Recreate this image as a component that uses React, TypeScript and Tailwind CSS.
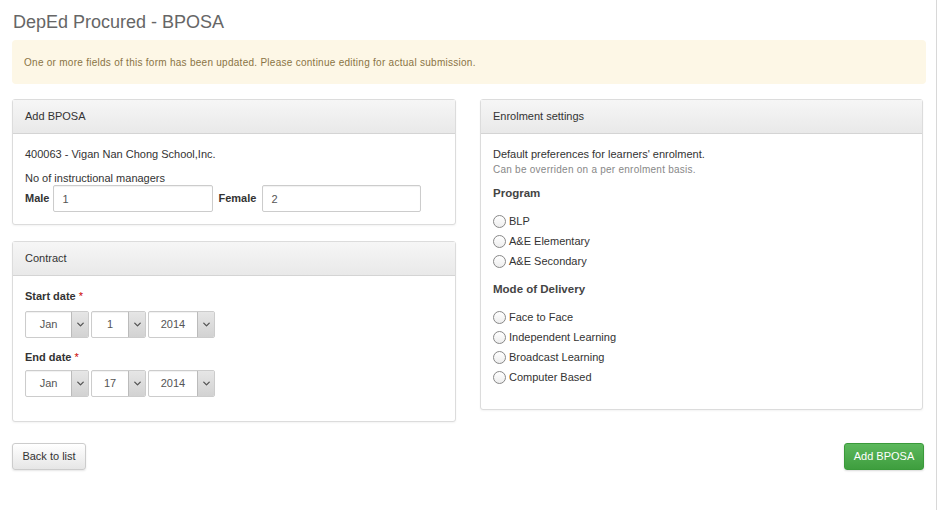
import { ChevronDown } from "lucide-react";

function Panel({ title, children, className = "" }: { title: string; children: React.ReactNode; className?: string }) {
  return (
    <div className={`rounded-[3px] border border-[#dcdcdc] bg-white shadow-[0_1px_2px_rgba(0,0,0,0.05)] ${className}`}>
      <div className="flex h-[34px] items-center border-b border-[#d4d4d4] bg-gradient-to-b from-[#f6f6f6] to-[#e9e9e9] px-3 text-[11px] text-[#333]">
        {title}
      </div>
      {children}
    </div>
  );
}

function Select({ value, width }: { value: string; width: string }) {
  return (
    <div className={`flex h-[27px] ${width} overflow-hidden rounded-[2px] border border-[#ccc] bg-white shadow-[inset_0_1px_1px_rgba(0,0,0,0.06)]`}>
      <div className="flex flex-1 items-center justify-center text-[11px] text-[#555]">{value}</div>
      <div className="flex w-[17px] items-center justify-center border-l border-[#bbb] bg-gradient-to-b from-[#e6e6e6] to-[#d2d2d2]">
        <ChevronDown size={11} strokeWidth={3} className="text-[#555]" />
      </div>
    </div>
  );
}

function Radio({ label }: { label: string }) {
  return (
    <label className="flex h-[20px] items-center gap-[3px] text-[11px] text-[#333]">
      <span className="h-[13px] w-[13px] rounded-full border border-[#888] bg-gradient-to-b from-white to-[#eee]" />
      {label}
    </label>
  );
}

export default function App() {
  return (
    <div className="h-[510px] w-[937px] border-r border-[#d8d8d8] bg-white px-3 font-['Liberation_Sans',Arial,sans-serif]">
      <h1 className="pt-[11px] pl-px text-[18px] leading-[22px] text-[#666]">DepEd Procured - BPOSA</h1>

      <div className="mt-[7px] flex h-[44px] w-[914px] items-center rounded-[4px] bg-[#fdf7e6] px-3 text-[10px] tracking-[0.27px] text-[#8a7444]">
        One or more fields of this form has been updated. Please continue editing for actual submission.
      </div>

      <div className="mt-[15px] flex gap-[24px]">
        <div className="flex w-[444px] flex-col gap-[16px]">
          <Panel title="Add BPOSA">
            <div className="px-3 pt-[13px] pb-[12px] text-[11px] text-[#333]">
              <div className="leading-[14px]">400063 - Vigan Nan Chong School,Inc.</div>
              <div className="mt-[10px] leading-[14px]">No of instructional managers</div>
              <div className="flex items-center">
                <span className="mr-[4px] font-bold">Male</span>
                <input
                  readOnly
                  value="1"
                  className="h-[27px] w-[160px] rounded-[2px] border border-[#ccc] px-[8px] text-[11px] text-[#555] shadow-[inset_0_1px_1px_rgba(0,0,0,0.06)] outline-none"
                />
                <span className="mr-[6px] ml-[5px] font-bold">Female</span>
                <input
                  readOnly
                  value="2"
                  className="h-[27px] w-[159px] rounded-[2px] border border-[#ccc] px-[8px] text-[11px] text-[#555] shadow-[inset_0_1px_1px_rgba(0,0,0,0.06)] outline-none"
                />
              </div>
            </div>
          </Panel>

          <Panel title="Contract" className="h-[181px]">
            <div className="px-3 pt-[13px] text-[11px] text-[#333]">
              <div className="font-bold leading-[14px]">
                Start date <span className="font-normal text-[#c00]">*</span>
              </div>
              <div className="mt-[8px] flex gap-[2px]">
                <Select value="Jan" width="w-[64px]" />
                <Select value="1" width="w-[55px]" />
                <Select value="2014" width="w-[67px]" />
              </div>
              <div className="mt-[12px] font-bold leading-[14px]">
                End date <span className="font-normal text-[#c00]">*</span>
              </div>
              <div className="mt-[6px] flex gap-[2px]">
                <Select value="Jan" width="w-[64px]" />
                <Select value="17" width="w-[55px]" />
                <Select value="2014" width="w-[67px]" />
              </div>
            </div>
          </Panel>
        </div>

        <Panel title="Enrolment settings" className="h-[311px] w-[443px]">
          <div className="px-3 pt-[13px] text-[11px] text-[#333]">
            <div className="leading-[14px]">Default preferences for learners' enrolment.</div>
            <div className="mt-[3px] text-[10px] leading-[12px] tracking-[0.25px] text-[#888]">Can be overriden on a per enrolment basis.</div>
            <div className="mt-[10px] text-[11.5px] font-bold leading-[14px] text-[#444]">Program</div>
            <div className="mt-[11px] flex flex-col">
              <Radio label="BLP" />
              <Radio label="A&E Elementary" />
              <Radio label="A&E Secondary" />
            </div>
            <div className="mt-[11px] text-[11.5px] font-bold leading-[14px] text-[#444]">Mode of Delivery</div>
            <div className="mt-[11px] flex flex-col">
              <Radio label="Face to Face" />
              <Radio label="Independent Learning" />
              <Radio label="Broadcast Learning" />
              <Radio label="Computer Based" />
            </div>
          </div>
        </Panel>
      </div>

      <div className="mt-[21px] flex w-[912px] justify-between">
        <button className="h-[27px] w-[74px] rounded-[3px] border border-[#ccc] bg-gradient-to-b from-white to-[#e6e6e6] text-[11px] text-[#333] shadow-[0_1px_2px_rgba(0,0,0,0.1)]">
          Back to list
        </button>
        <button className="h-[27px] w-[80px] rounded-[3px] border border-[#3a9a3a] bg-gradient-to-b from-[#5cb85c] to-[#3e9e3e] text-[11px] text-white shadow-[0_1px_2px_rgba(0,0,0,0.15)]">
          Add BPOSA
        </button>
      </div>
    </div>
  );
}
